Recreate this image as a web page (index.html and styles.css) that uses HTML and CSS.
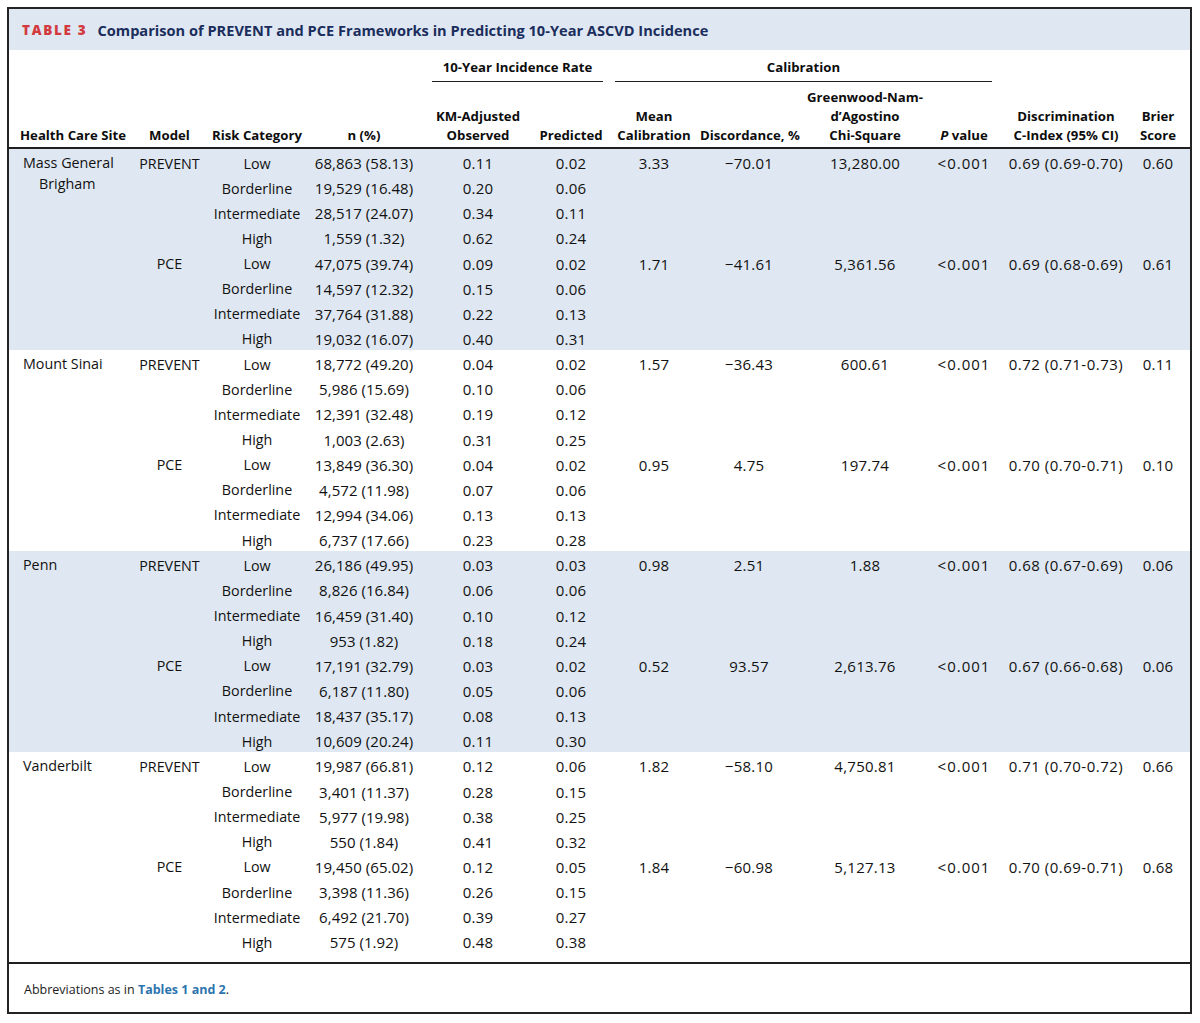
FILE: index.html
```html
<!DOCTYPE html>
<html>
<head>
<meta charset="utf-8">
<link rel="stylesheet" href="styles.css">
</head>
<body>
<div class="frame">
  <div class="title-bar"><span class="label">TABLE 3</span><span class="title">Comparison of PREVENT and PCE Frameworks in Predicting 10-Year ASCVD Incidence</span></div>
  <div class="table-wrap">
  <table class="data">
    <colgroup>
      <col class="c1"><col class="c2"><col class="c3"><col class="c4"><col class="c5"><col class="c6"><col class="c7"><col class="c8"><col class="c9"><col class="c10"><col class="c11"><col class="c12">
    </colgroup>
    <thead>
      <tr class="spanners">
        <th></th><th></th><th></th><th></th>
        <th colspan="2"><div class="spanner">10-Year Incidence Rate</div></th>
        <th colspan="4"><div class="spanner">Calibration</div></th>
        <th></th><th></th>
      </tr>
      <tr class="heads">
        <th class="site-h">Health Care Site</th>
        <th>Model</th>
        <th>Risk Category</th>
        <th>n (%)</th>
        <th>KM-Adjusted<br>Observed</th>
        <th>Predicted</th>
        <th>Mean<br>Calibration</th>
        <th>Discordance, %</th>
        <th>Greenwood-Nam-<br>d’Agostino<br>Chi-Square</th>
        <th><i>P</i> value</th>
        <th>Discrimination<br>C-Index (95% CI)</th>
        <th class="last">Brier<br>Score</th>
      </tr>
    </thead>
    <tbody class="shade">
      <tr><td rowspan="8" class="t site">Mass General<br>Brigham</td><td rowspan="4" class="t">PREVENT</td><td class="t">Low</td><td class="n">68,863 (58.13)</td><td>0.11</td><td>0.02</td><td rowspan="4">3.33</td><td rowspan="4">−70.01</td><td rowspan="4">13,280.00</td><td rowspan="4" class="p">&lt;0.001</td><td rowspan="4" class="ci">0.69 (0.69-0.70)</td><td rowspan="4" class="last">0.60</td></tr>
      <tr><td class="t">Borderline</td><td class="n">19,529 (16.48)</td><td>0.20</td><td>0.06</td></tr>
      <tr><td class="t">Intermediate</td><td class="n">28,517 (24.07)</td><td>0.34</td><td>0.11</td></tr>
      <tr><td class="t">High</td><td class="n">1,559 (1.32)</td><td>0.62</td><td>0.24</td></tr>
      <tr><td rowspan="4" class="t">PCE</td><td class="t">Low</td><td class="n">47,075 (39.74)</td><td>0.09</td><td>0.02</td><td rowspan="4">1.71</td><td rowspan="4">−41.61</td><td rowspan="4">5,361.56</td><td rowspan="4" class="p">&lt;0.001</td><td rowspan="4" class="ci">0.69 (0.68-0.69)</td><td rowspan="4" class="last">0.61</td></tr>
      <tr><td class="t">Borderline</td><td class="n">14,597 (12.32)</td><td>0.15</td><td>0.06</td></tr>
      <tr><td class="t">Intermediate</td><td class="n">37,764 (31.88)</td><td>0.22</td><td>0.13</td></tr>
      <tr><td class="t">High</td><td class="n">19,032 (16.07)</td><td>0.40</td><td>0.31</td></tr>
    </tbody>
    <tbody>
      <tr><td rowspan="8" class="t site">Mount Sinai</td><td rowspan="4" class="t">PREVENT</td><td class="t">Low</td><td class="n">18,772 (49.20)</td><td>0.04</td><td>0.02</td><td rowspan="4">1.57</td><td rowspan="4">−36.43</td><td rowspan="4">600.61</td><td rowspan="4" class="p">&lt;0.001</td><td rowspan="4" class="ci">0.72 (0.71-0.73)</td><td rowspan="4" class="last">0.11</td></tr>
      <tr><td class="t">Borderline</td><td class="n">5,986 (15.69)</td><td>0.10</td><td>0.06</td></tr>
      <tr><td class="t">Intermediate</td><td class="n">12,391 (32.48)</td><td>0.19</td><td>0.12</td></tr>
      <tr><td class="t">High</td><td class="n">1,003 (2.63)</td><td>0.31</td><td>0.25</td></tr>
      <tr><td rowspan="4" class="t">PCE</td><td class="t">Low</td><td class="n">13,849 (36.30)</td><td>0.04</td><td>0.02</td><td rowspan="4">0.95</td><td rowspan="4">4.75</td><td rowspan="4">197.74</td><td rowspan="4" class="p">&lt;0.001</td><td rowspan="4" class="ci">0.70 (0.70-0.71)</td><td rowspan="4" class="last">0.10</td></tr>
      <tr><td class="t">Borderline</td><td class="n">4,572 (11.98)</td><td>0.07</td><td>0.06</td></tr>
      <tr><td class="t">Intermediate</td><td class="n">12,994 (34.06)</td><td>0.13</td><td>0.13</td></tr>
      <tr><td class="t">High</td><td class="n">6,737 (17.66)</td><td>0.23</td><td>0.28</td></tr>
    </tbody>
    <tbody class="shade">
      <tr><td rowspan="8" class="t site">Penn</td><td rowspan="4" class="t">PREVENT</td><td class="t">Low</td><td class="n">26,186 (49.95)</td><td>0.03</td><td>0.03</td><td rowspan="4">0.98</td><td rowspan="4">2.51</td><td rowspan="4">1.88</td><td rowspan="4" class="p">&lt;0.001</td><td rowspan="4" class="ci">0.68 (0.67-0.69)</td><td rowspan="4" class="last">0.06</td></tr>
      <tr><td class="t">Borderline</td><td class="n">8,826 (16.84)</td><td>0.06</td><td>0.06</td></tr>
      <tr><td class="t">Intermediate</td><td class="n">16,459 (31.40)</td><td>0.10</td><td>0.12</td></tr>
      <tr><td class="t">High</td><td class="n">953 (1.82)</td><td>0.18</td><td>0.24</td></tr>
      <tr><td rowspan="4" class="t">PCE</td><td class="t">Low</td><td class="n">17,191 (32.79)</td><td>0.03</td><td>0.02</td><td rowspan="4">0.52</td><td rowspan="4">93.57</td><td rowspan="4">2,613.76</td><td rowspan="4" class="p">&lt;0.001</td><td rowspan="4" class="ci">0.67 (0.66-0.68)</td><td rowspan="4" class="last">0.06</td></tr>
      <tr><td class="t">Borderline</td><td class="n">6,187 (11.80)</td><td>0.05</td><td>0.06</td></tr>
      <tr><td class="t">Intermediate</td><td class="n">18,437 (35.17)</td><td>0.08</td><td>0.13</td></tr>
      <tr><td class="t">High</td><td class="n">10,609 (20.24)</td><td>0.11</td><td>0.30</td></tr>
    </tbody>
    <tbody>
      <tr><td rowspan="8" class="t site">Vanderbilt</td><td rowspan="4" class="t">PREVENT</td><td class="t">Low</td><td class="n">19,987 (66.81)</td><td>0.12</td><td>0.06</td><td rowspan="4">1.82</td><td rowspan="4">−58.10</td><td rowspan="4">4,750.81</td><td rowspan="4" class="p">&lt;0.001</td><td rowspan="4" class="ci">0.71 (0.70-0.72)</td><td rowspan="4" class="last">0.66</td></tr>
      <tr><td class="t">Borderline</td><td class="n">3,401 (11.37)</td><td>0.28</td><td>0.15</td></tr>
      <tr><td class="t">Intermediate</td><td class="n">5,977 (19.98)</td><td>0.38</td><td>0.25</td></tr>
      <tr><td class="t">High</td><td class="n">550 (1.84)</td><td>0.41</td><td>0.32</td></tr>
      <tr><td rowspan="4" class="t">PCE</td><td class="t">Low</td><td class="n">19,450 (65.02)</td><td>0.12</td><td>0.05</td><td rowspan="4">1.84</td><td rowspan="4">−60.98</td><td rowspan="4">5,127.13</td><td rowspan="4" class="p">&lt;0.001</td><td rowspan="4" class="ci">0.70 (0.69-0.71)</td><td rowspan="4" class="last">0.68</td></tr>
      <tr><td class="t">Borderline</td><td class="n">3,398 (11.36)</td><td>0.26</td><td>0.15</td></tr>
      <tr><td class="t">Intermediate</td><td class="n">6,492 (21.70)</td><td>0.39</td><td>0.27</td></tr>
      <tr><td class="t">High</td><td class="n">575 (1.92)</td><td>0.48</td><td>0.38</td></tr>
    </tbody>
  </table>
  </div>
  <div class="footnote">Abbreviations as in <span class="ref">Tables 1 and 2</span>.</div>
</div>
</body>
</html>
```
FILE: styles.css
```css
html, body {
  margin: 0;
  padding: 0;
  background: #ffffff;
}
body {
  font-family: "Open Sans", "Noto Sans", "Liberation Sans", sans-serif;
  color: #111111;
}
.frame {
  margin: 7px 0 0 7px;
  width: 1181px;
  border: 2px solid #232323;
}
.title-bar {
  height: 41px;
  background: #dfe8f2;
  display: flex;
  align-items: center;
  padding-left: 13px;
  font-weight: 700;
  font-size: 14.6px;
}
.label {
  color: #d23a40;
  font-weight: 800;
  font-size: 13.5px;
  letter-spacing: 1.7px;
  margin-right: 10px;
}
.title {
  color: #1b2d5c;
}
.table-wrap {
  padding-bottom: 9px;
}
.data {
  width: 1181px;
  table-layout: fixed;
  border-collapse: separate;
  border-spacing: 0;
  font-size: 15px;
}
col.c1 { width: 122px; }
col.c2 { width: 77px; }
col.c3 { width: 98px; }
col.c4 { width: 116px; }
col.c5 { width: 112px; }
col.c6 { width: 74px; }
col.c7 { width: 92px; }
col.c8 { width: 98px; }
col.c9 { width: 134px; }
col.c10 { width: 64px; }
col.c11 { width: 140px; }
col.c12 { width: 54px; }
th {
  font-weight: 700;
  font-size: 13.2px;
  color: #0d0d0d;
  padding: 0;
  white-space: nowrap;
  text-align: center;
}
.spanners th {
  padding-top: 8px;
  line-height: 19px;
  vertical-align: top;
}
.spanner {
  margin: 0 5px 0 10px;
  padding-bottom: 4px;
  border-bottom: 1.5px solid #1f1f1f;
}
.spanners th:nth-child(6) .spanner {
  margin: 0 4px 0 7px;
}
.heads th {
  height: 66.5px;
  box-sizing: border-box;
  vertical-align: bottom;
  line-height: 19px;
  padding-bottom: 1.5px;
  border-bottom: 2px solid #1f1f1f;
}
.heads th.site-h {
  text-align: left;
  padding-left: 11px;
}
th.last, td.last {
  padding-right: 10px;
}
td {
  height: 25.15px;
  box-sizing: border-box;
  padding: 4.5px 0 0 0;
  line-height: 20px;
  vertical-align: top;
  text-align: center;
  white-space: nowrap;
  letter-spacing: 0.25px;
}
td.n {
  letter-spacing: 0.05px;
}
td.t {
  font-size: 14.3px;
  letter-spacing: 0;
  padding-top: 5px;
}
td.ci {
  letter-spacing: 0.5px;
}
td.p {
  letter-spacing: 1px;
}
td.site {
  text-align: left;
  white-space: normal;
  line-height: 21px;
  padding: 3.5px 0 0 30px;
  text-indent: -16px;
}
tbody.shade td {
  background: #dfe8f2;
}
.footnote {
  border-top: 2px solid #1f1f1f;
  height: 50px;
  box-sizing: border-box;
  padding: 16px 0 0 15px;
  font-size: 12.5px;
  line-height: 20px;
  color: #1c1c1c;
}
.ref {
  color: #2c74ad;
  font-weight: 700;
}
```
